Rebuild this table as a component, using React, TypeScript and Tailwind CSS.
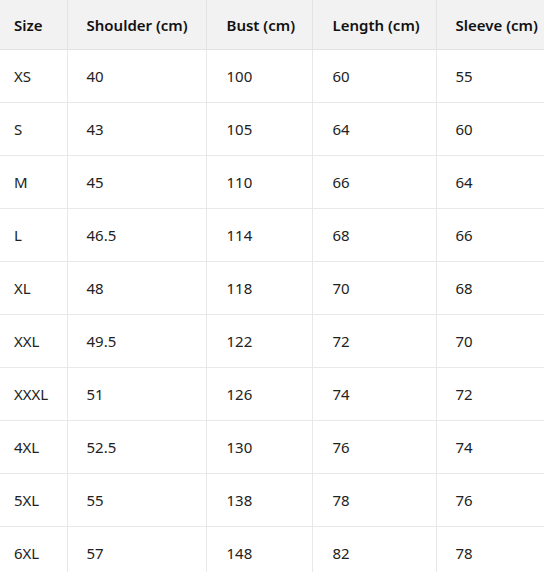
import React from "react";

const rows = [
  ["XS", "40", "100", "60", "55"],
  ["S", "43", "105", "64", "60"],
  ["M", "45", "110", "66", "64"],
  ["L", "46.5", "114", "68", "66"],
  ["XL", "48", "118", "70", "68"],
  ["XXL", "49.5", "122", "72", "70"],
  ["XXXL", "51", "126", "74", "72"],
  ["4XL", "52.5", "130", "76", "74"],
  ["5XL", "55", "138", "78", "76"],
  ["6XL", "57", "148", "82", "78"],
];

const headers = ["Size", "Shoulder (cm)", "Bust (cm)", "Length (cm)", "Sleeve (cm)"];
const widths = ["w-[67px]", "w-[139px]", "w-[106px]", "w-[124px]", "w-[130px]"];
const pads = ["pl-[14px]", "pl-[19px]", "pl-[20px]", "pl-[20px]", "pl-[19px]"];

export default function App() {
  return (
    <div className="w-[544px] h-[572px] overflow-hidden bg-white" style={{ fontFamily: '"Noto Sans", "Open Sans", sans-serif' }}>
      <table className="border-collapse table-fixed w-[566px] text-[15px]">
        <thead>
          <tr className="bg-[#f2f2f2] h-[49px]">
            {headers.map((h, i) => (
              <th
                key={h}
                className={`${widths[i]} ${pads[i]} pt-[1px] text-left font-semibold text-[#111] border-b border-[#e3e3e3] ${i > 0 ? "border-l" : ""} border-[#e3e3e3] whitespace-nowrap`}
              >
                {h}
              </th>
            ))}
          </tr>
        </thead>
        <tbody>
          {rows.map((r) => (
            <tr key={r[0]} className="h-[53px]">
              {r.map((c, i) => (
                <td
                  key={i}
                  className={`${pads[i]} pt-[1px] text-left text-[#222] border-b border-[#e8e8e8] ${i > 0 ? "border-l" : ""}`}
                >
                  {c}
                </td>
              ))}
            </tr>
          ))}
        </tbody>
      </table>
    </div>
  );
}
